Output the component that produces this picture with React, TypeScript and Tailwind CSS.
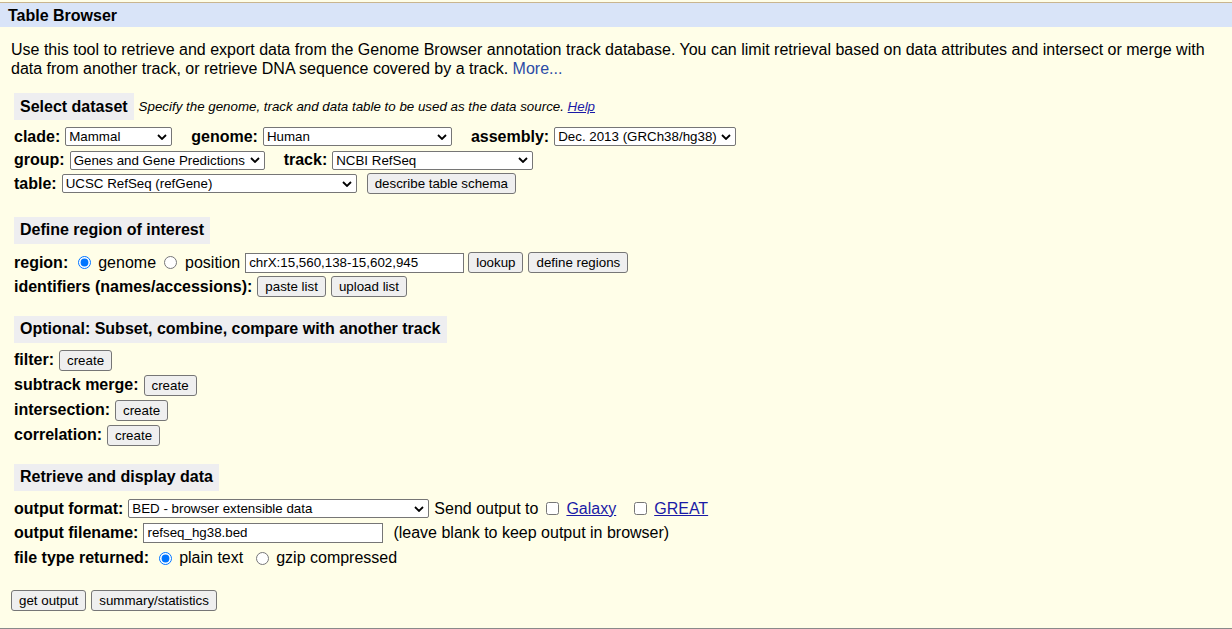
import React from 'react';

const Chevron: React.FC = () => (
  <svg className="absolute right-[5px] top-1/2 -translate-y-1/2 pointer-events-none" width="10" height="6" viewBox="0 0 10 6">
    <polyline points="1,1 5,5 9,1" fill="none" stroke="#000" strokeWidth="1.8" />
  </svg>
);

const Select: React.FC<{ value: string; className: string }> = ({ value, className }) => (
  <span className={`relative inline-flex h-[19px] ${className}`}>
    <select
      defaultValue={value}
      className="w-full h-full appearance-none bg-white border border-[#767676] rounded-[2px] pl-[3px] pr-[16px] text-[13.33px] leading-[17px] text-black"
    >
      <option>{value}</option>
    </select>
    <Chevron />
  </span>
);

const Btn: React.FC<{ children: React.ReactNode; className?: string }> = ({ children, className = '' }) => (
  <button className={`h-[21px] px-[7px] bg-[#efefef] border border-[#767676] rounded-[3px] text-[13.33px] leading-[19px] text-black ${className}`}>
    {children}
  </button>
);

const Label: React.FC<{ children: React.ReactNode; className?: string }> = ({ children, className = '' }) => (
  <span className={`font-bold text-[16px] mr-[5px] ${className}`}>{children}</span>
);

const SectionTitle: React.FC<{ children: React.ReactNode }> = ({ children }) => (
  <div className="inline-flex items-center h-[27px] px-[6px] bg-[#eeeef0] font-bold text-[16px]">{children}</div>
);

const App: React.FC = () => {
  return (
    <div className="w-[1232px] h-[629px] bg-[#fffee8] text-black overflow-hidden flex flex-col" style={{ fontFamily: '"Liberation Sans", Arial, sans-serif' }}>
      <div className="h-[2px]" />
      <div className="h-px bg-[#c9b58f]" />
      <div className="h-[24px] bg-[#d9e4f8] flex items-center pl-[8px] pt-px font-bold text-[16px]">Table Browser</div>

      <p className="mt-[13px] pl-[11px] pr-[20px] text-[16px] leading-[19px]">
        Use this tool to retrieve and export data from the Genome Browser annotation track database. You can limit retrieval based on data attributes and intersect or merge with data from another track, or retrieve DNA sequence covered by a track.{' '}
        <a className="text-[#2b4ba6]">More...</a>
      </p>

      <div className="pl-[14px] flex flex-col">
        {/* Select dataset */}
        <div className="mt-[15px] flex items-center">
          <SectionTitle>Select dataset</SectionTitle>
          <span className="ml-[5px] italic text-[13.33px]">
            Specify the genome, track and data table to be used as the data source. <a className="underline text-[#1a1aa6]">Help</a>
          </span>
        </div>
        <div className="mt-[5px] flex items-center h-[23.5px]">
          <Label>clade:</Label>
          <Select value="Mammal" className="w-[107px]" />
          <Label className="ml-[19px]">genome:</Label>
          <Select value="Human" className="w-[189px]" />
          <Label className="ml-[19px]">assembly:</Label>
          <Select value="Dec. 2013 (GRCh38/hg38)" className="w-[182px]" />
        </div>
        <div className="flex items-center h-[23.5px]">
          <Label>group:</Label>
          <Select value="Genes and Gene Predictions" className="w-[195px]" />
          <Label className="ml-[19px]">track:</Label>
          <Select value="NCBI RefSeq" className="w-[201px]" />
        </div>
        <div className="flex items-center h-[23.5px]">
          <Label>table:</Label>
          <Select value="UCSC RefSeq (refGene)" className="w-[295px]" />
          <Btn className="ml-[10px]">describe table schema</Btn>
        </div>

        {/* Define region */}
        <div className="mt-[21px]">
          <SectionTitle>Define region of interest</SectionTitle>
        </div>
        <div className="mt-[7px] flex items-center h-6 text-[16px]">
          <Label className="mr-[10px]">region:</Label>
          <input type="radio" name="region" defaultChecked className="w-[13px] h-[13px] m-0 mr-[7px]" />
          <span className="mr-[8px]">genome</span>
          <input type="radio" name="region" className="w-[13px] h-[13px] m-0 mr-[8px]" />
          <span className="mr-[5px]">position</span>
          <input type="text" defaultValue="chrX:15,560,138-15,602,945" className="w-[219px] h-[20px] bg-white border border-[#767676] px-[3px] text-[13.33px]" />
          <Btn className="ml-[4px]">lookup</Btn>
          <Btn className="ml-[5px]">define regions</Btn>
        </div>
        <div className="flex items-center h-6">
          <Label>identifiers (names/accessions):</Label>
          <Btn>paste list</Btn>
          <Btn className="ml-[5px]">upload list</Btn>
        </div>

        {/* Optional */}
        <div className="mt-[17px]">
          <SectionTitle>Optional: Subset, combine, compare with another track</SectionTitle>
        </div>
        <div className="mt-[5px] flex flex-col">
          {['filter:', 'subtrack merge:', 'intersection:', 'correlation:'].map((l) => (
            <div key={l} className="flex items-center h-[25px]">
              <Label className="mr-[4px]">{l}</Label>
              <Btn>create</Btn>
            </div>
          ))}
        </div>

        {/* Retrieve */}
        <div className="mt-[16px]">
          <SectionTitle>Retrieve and display data</SectionTitle>
        </div>
        <div className="mt-[6px] flex items-center h-6 text-[16px]">
          <Label>output format:</Label>
          <Select value="BED - browser extensible data" className="w-[301px]" />
          <span className="ml-[5px] mr-[8px]">Send output to</span>
          <input type="checkbox" className="w-[13px] h-[13px] m-0 mr-[7px]" />
          <a className="underline text-[#1a1aa6]">Galaxy</a>
          <input type="checkbox" className="w-[13px] h-[13px] m-0 ml-[18px] mr-[7px]" />
          <a className="underline text-[#1a1aa6]">GREAT</a>
        </div>
        <div className="flex items-center h-6 text-[16px]">
          <Label>output filename:</Label>
          <input type="text" defaultValue="refseq_hg38.bed" className="w-[240px] h-[20px] bg-white border border-[#767676] px-[3px] text-[13.33px]" />
          <span className="ml-[10px]">(leave blank to keep output in browser)</span>
        </div>
        <div className="flex items-center h-[27px] text-[16px]">
          <Label className="mr-[10px]">file type returned:</Label>
          <input type="radio" name="ftype" defaultChecked className="w-[13px] h-[13px] m-0 mr-[7px]" />
          <span className="mr-[13px]">plain text</span>
          <input type="radio" name="ftype" className="w-[13px] h-[13px] m-0 mr-[7px]" />
          <span>gzip compressed</span>
        </div>
      </div>

      <div className="mt-[18px] pl-[11px] flex items-center">
        <Btn>get output</Btn>
        <Btn className="ml-[5px]">summary/statistics</Btn>
      </div>

      <div className="flex-1" />
      <div className="h-px bg-[#8a8a8a]" />
    </div>
  );
};

export default App;
